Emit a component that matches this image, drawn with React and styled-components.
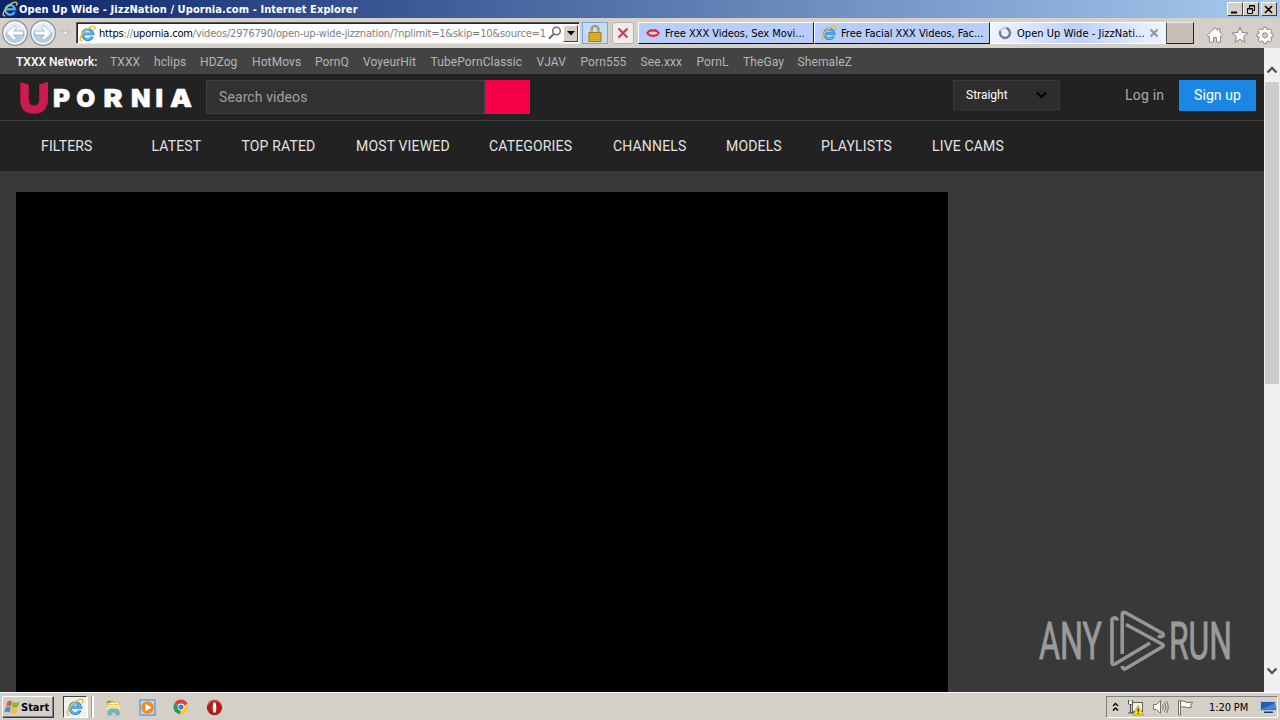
import React from 'react';
import styled, { createGlobalStyle } from 'styled-components';

const networkLinks = [
    { title: 'TXXX', width: 44 },
    { title: 'hclips', width: 46 },
    { title: 'HDZog', width: 52 },
    { title: 'HotMovs', width: 63 },
    { title: 'PornQ', width: 48 },
    { title: 'VoyeurHit', width: 67.5 },
    { title: 'TubePornClassic', width: 106 },
    { title: 'VJAV', width: 44 },
    { title: 'Porn555', width: 60 },
    { title: 'See.xxx', width: 56 },
    { title: 'PornL', width: 46.5 },
    { title: 'TheGay', width: 54.5 },
    { title: 'ShemaleZ', width: 60 },
];

const menuItems = [
    { title: 'FILTERS', width: 110.5 },
    { title: 'LATEST', width: 90 },
    { title: 'TOP RATED', width: 114.5 },
    { title: 'MOST VIEWED', width: 133 },
    { title: 'CATEGORIES', width: 124 },
    { title: 'CHANNELS', width: 113 },
    { title: 'MODELS', width: 95 },
    { title: 'PLAYLISTS', width: 111 },
    { title: 'LIVE CAMS', width: 80 },
];

/* Icons */

const IeIcon = ({ size = 16 }) => (
    <svg width={size} height={size} viewBox="0 0 16 16" fill="none">
        <path d="M12.6 11a4.800 4.800 0 1 1 .4-2.700H4.5" stroke="#2480cc" strokeWidth="2.700" />
        <path d="M12.4 10.900a4.700 4.700 0 1 1 .4-2.700H4.600" stroke="#62bdf2" strokeWidth="1.300" />
        <path d="M3.2 14.6C.2 15.7.3 11.8 4 7.400 7.800 2.800 13 .2 14.500 1.500c.8.7.5 2-.2 3.200" stroke="#edc03c" strokeWidth="1.400" />
    </svg>
);

const ArrowIcon = ({ flip }) => (
    <svg width="28" height="28" viewBox="0 0 28 28">
        <circle cx="14" cy="14" r="12.300" fill="#e3edf5" stroke="#8a939d" strokeWidth="1.300" />
        <path d="M3 14a11 11 0 0 0 22 0z" fill="#b7cddd" />
        <circle cx="14" cy="14" r="10.700" fill="none" stroke="#f8fbfd" strokeWidth="1.200" />
        <path
            transform={flip ? 'translate(28 0) scale(-1 1)' : undefined}
            d="M5.500 14l7.500-7.500 2.500 2.500-3 3H22.500v4H12.500l3 3-2.500 2.500z"
            fill="#fff"
            stroke="#8fa9bd"
            strokeWidth=".8"
        />
    </svg>
);

const SearchIcon = () => (
    <svg width="14" height="14" viewBox="0 0 14 14" fill="none" stroke="#707070">
        <circle cx="8.500" cy="5" r="3.800" strokeWidth="1.500" />
        <path d="M5.700 8L1 12.700" strokeWidth="2" />
    </svg>
);

const LockIcon = () => (
    <svg width="14" height="17" viewBox="0 0 14 17">
        <path d="M3.500 8V4.500a3.500 3.500 0 0 1 7 0V8" fill="none" stroke="#7d7448" strokeWidth="2" />
        <path d="M3.500 8V4.500a3.500 3.500 0 0 1 7 0V8" fill="none" stroke="#d2c684" strokeWidth=".8" />
        <rect x="1" y="7.500" width="12" height="9" fill="#e5b42d" stroke="#a27813" />
        <path d="M2 9.500h10M2 12h10M2 14.500h10" stroke="#cf9f20" />
    </svg>
);

const LipsIcon = () => (
    <svg width="16" height="16" viewBox="0 0 16 16">
        <path d="M1 8c2-2.500 4-4 5.500-4L8 4.700 9.500 4C11 4 13 5.500 15 8c-2 3-4.500 4-7 4S3 11 1 8z" fill="#d62c46" />
        <path d="M3.500 8c1.500-1.800 7.500-1.800 9 0-1.500 2-7.500 2-9 0z" fill="#fff" />
        <path d="M6 6.500v3M8 6.500v3M10 6.500v3" stroke="#d8808e" strokeWidth=".7" />
    </svg>
);

const SpinnerIcon = () => (
    <svg width="14" height="14" viewBox="0 0 14 14" fill="none">
        <circle cx="7" cy="7" r="5" stroke="#c1cce0" strokeWidth="2.300" />
        <path d="M8.500 2.200A5 5 0 1 1 2.400 5" stroke="#707b93" strokeWidth="2.300" />
    </svg>
);

const HomeIcon = () => (
    <svg width="18" height="18" viewBox="0 0 18 18">
        <path
            d="M9 1.800l2.700 2.600V2.700h2.200v3.700l3 3-1.300 1.300-1-.9v6.400h-4.100v-4.700h-3v4.700H3.400V9.800l-1 .9-1.300-1.300z"
            fill="#fff"
            stroke="#8b8b8b"
        />
    </svg>
);

const StarIcon = () => (
    <svg width="18" height="18" viewBox="0 0 18 18">
        <path d="M9 1.300l2.200 5.300 5.700.4-4.400 3.700 1.400 5.600L9 13.300l-4.900 3 1.400-5.600L1.100 7l5.700-.4z" fill="#fff" stroke="#858585" />
    </svg>
);

const GearIcon = () => (
    <svg width="18" height="18" viewBox="0 0 18 18">
        <path
            d="M7.600 1.300h2.800l.5 2 1.100.5 1.900-1.100 1.900 2-1.100 1.800.5 1.100 1.900.5v2.400l-1.900.6-.5 1.100 1.100 1.800-1.900 2-1.900-1.100-1.100.5-.5 2H7.600l-.5-2-1.100-.5L4.100 16l-1.900-2 1.100-1.800-.5-1.100-1.900-.6V8.100l1.900-.5.5-1.100-1.100-1.800 1.900-2L6 3.800l1.100-.5z"
            fill="#fff"
            stroke="#858585"
        />
        <circle cx="9" cy="9.300" r="2.500" fill="#d4d0c8" stroke="#858585" />
    </svg>
);

const WindowsIcon = () => (
    <svg width="17" height="17" viewBox="0 0 17 17">
        <path d="M3.500 2.600C5 1.600 6.500 1.500 8.200 2.500L7 7.500C5.300 6.600 3.800 6.700 2 7.600z" fill="#ea5b2a" />
        <path d="M9 3c2 1 4 1 6.500-.4L14 7.700c-2 1.200-4 1.200-6.200.2z" fill="#82b941" />
        <path d="M1.700 8.500c1.800-.9 3.400-.9 5.100 0l-1.300 5c-1.600-1-3.300-.9-5.200 0z" fill="#3d8bd4" />
        <path d="M7.600 9c2 1 4 1 6.200-.2l-1.400 5.100c-2 1.200-4 1.100-6.100 0z" fill="#f6bd29" />
    </svg>
);

const FolderIcon = () => (
    <svg width="17" height="17" viewBox="0 0 17 17">
        <path d="M2 2h6l1 2h6v9H2z" fill="#e9cb65" stroke="#c9aa48" strokeWidth=".7" />
        <path d="M4 4.500h10M3 6.500h12" stroke="#fff8ca" />
        <path d="M1.500 7.500h14v5h-14z" fill="#f8e69b" />
        <path d="M3 16v-3.500C3 10.800 4 10 5.500 10h6c1.700 0 2.500.8 2.500 2.500V16h-3v-3H6v3z" fill="#72b8df" stroke="#438fbd" strokeWidth=".5" />
        <path d="M3 2v2M5 2v2" stroke="#48a868" strokeWidth="1.500" />
    </svg>
);

const PlayerIcon = () => (
    <svg width="17" height="17" viewBox="0 0 17 17">
        <rect x="1" y="1" width="15" height="15" fill="#b7dcf6" stroke="#4386bd" />
        <circle cx="8.500" cy="8.500" r="6.300" fill="#f28a1c" />
        <path d="M6.500 4.800l6 3.700-6 3.700z" fill="#fff" />
    </svg>
);

const ChromeIcon = () => (
    <svg width="16" height="16" viewBox="0 0 16 16">
        <path d="M8 8L1.500 4.300A7.200 7.200 0 0 1 14.500 5z" fill="#dc4437" />
        <path d="M8 8L1.500 4.300A7.200 7.200 0 0 0 7.400 15.200z" fill="#2b9b52" />
        <path d="M8 8l6.500-3A7.200 7.200 0 0 1 7.400 15.200z" fill="#f9c928" />
        <circle cx="8" cy="8" r="3.400" fill="#fff" />
        <circle cx="8" cy="8" r="2.600" fill="#3b7ddd" />
    </svg>
);

const OperaIcon = () => (
    <svg width="17" height="17" viewBox="0 0 17 17">
        <circle cx="8.500" cy="8.500" r="7.700" fill="#b31a1d" />
        <path d="M2.500 5.500c2-5 10-5 12 0" stroke="#dd6a67" fill="none" />
        <ellipse cx="8.500" cy="8.500" rx="1.800" ry="5.300" fill="#fff" />
    </svg>
);

const NetworkIcon = () => (
    <svg width="17" height="17" viewBox="0 0 17 17">
        <rect x="5.500" y="3.500" width="10" height="9" fill="#f3f3ee" stroke="#63635e" />
        <path d="M1.500 1v4h4V1M3.500 5v8.500H8M1 14h5" fill="none" stroke="#4f4f4b" />
        <path d="M2 2.500h3V5H2z" fill="#fff" />
        <path d="M11 6.500L5.800 16h10.700z" fill="#f7df23" stroke="#a78c0e" strokeWidth=".7" />
        <path d="M11.200 9.500v3.200M11.200 13.700v1.300" stroke="#222" strokeWidth="1.300" />
    </svg>
);

const SpeakerIcon = () => (
    <svg width="17" height="16" viewBox="0 0 17 16" fill="none" stroke="#77736c">
        <path d="M1.500 5.500h3l4-4v13l-4-4h-3z" fill="#fff" />
        <path d="M10.500 5.500q1.800 2.500 0 5M12.500 3.500q3 4.500 0 9M14.500 2q3.500 6 0 12" />
    </svg>
);

const FlagIcon = () => (
    <svg width="17" height="17" viewBox="0 0 17 17">
        <path d="M1.500 1.500h2V16h-2z" fill="#fff" stroke="#6c6963" />
        <path d="M3.500 2.500c2-.8 4-.6 5.500.8h6.500l-2 3.500 1 1.500c-2 1-4 .5-6-.3-1.500-.5-3-.3-5 .5z" fill="#fff" stroke="#6c6963" />
    </svg>
);

const DesktopIcon = () => (
    <svg width="17" height="14" viewBox="0 0 17 14">
        <path d="M.5 1.500h15l1 9h-16z" fill="#245fae" stroke="#b5c8db" />
        <path d="M2 8C5 8 10 6 15 2.500v7H2z" fill="#4489d0" />
        <path d="M4 11.500h9v1.500H4z" fill="#1e3e6e" />
    </svg>
);

const Chevron = ({ up, color = '#555', size = 12 }) => (
    <svg width={size} height="8" viewBox="0 0 12 8" fill="none" stroke={color} strokeWidth="2.300">
        <path d={up ? 'M1.500 6.500L6 2l4.500 4.500' : 'M1.500 1.500L6 6l4.500-4.500'} />
    </svg>
);

const logoLetters = [
    { letter: 'P', x: 33, width: 17 },
    { letter: 'O', x: 56.3, width: 19 },
    { letter: 'R', x: 83.4, width: 19 },
    { letter: 'N', x: 111, width: 19.5 },
    { letter: 'I', x: 135.5, width: 7.5 },
    { letter: 'A', x: 150, width: 22 },
];

const SiteLogo = () => (
    <svg width="174" height="36" viewBox="0 0 174 36">
        <path d="M.3 2l8.500 2.500v14.500c0 4.500 1.900 6.500 5.200 6.500s5.200-2 5.200-6.500V4.500L28 2v17.500c0 9-4.800 14.300-14 14.300S.3 28.500.3 19.500z" fill="#cc1b4f" />
        <g fill="#fff" stroke="#fff" strokeWidth=".5" fontFamily="Inter" fontWeight="900" fontSize="24.500">
            {logoLetters.map((item) => (
                <text key={item.letter} x={item.x} y="27" textLength={item.width} lengthAdjust="spacingAndGlyphs">
                    {item.letter}
                </text>
            ))}
        </g>
    </svg>
);

const Watermark = () => (
    <svg width="210" height="64" viewBox="0 0 210 64" overflow="visible" fill="#9b9b9b" fontFamily="Roboto" fontSize="51">
        <g stroke="#9b9b9b" strokeWidth=".9">
            <text x="2" y="50" textLength="63" lengthAdjust="spacingAndGlyphs">ANY</text>
            <text x="132" y="50" textLength="63" lengthAdjust="spacingAndGlyphs">RUN</text>
        </g>
        <g fill="none" stroke="#969696" strokeWidth="3.600" strokeLinejoin="round">
            <path d="M80.500 11.500Q79.500 8.500 77 9t-2 3v41.500q0 3 3 1.500L113 34" />
            <path d="M85.200 45V6q0-4 3.500-2.200L125 24q2.500 2 0 3.500-1.500.8-4-.8" />
            <path d="M89 15.500L125 35q2.500 1.500 0 3L89 59.500q-3 1.500-4-2.500" />
        </g>
    </svg>
);

/* Page */

function App() {
    return (
        <Screen>
            <GlobalStyle />
            <TitleBar>
                <IeIcon />
                <WindowTitle>Open Up Wide - JizzNation / Upornia.com - Internet Explorer</WindowTitle>
                <WindowButtons>
                    <WindowButton>
                        <svg width="10" height="9"><path d="M1 7.500h6" stroke="#000" strokeWidth="2" /></svg>
                    </WindowButton>
                    <WindowButton>
                        <svg width="10" height="9" fill="none" stroke="#000">
                            <path d="M3.500 3V.5h5v5H7M3 1h6M1.500 3.500h5v5h-5zM1 4h6" />
                        </svg>
                    </WindowButton>
                    <WindowButton $gap>
                        <svg width="10" height="9"><path d="M1 1l7 7M8 1L1 8" stroke="#000" strokeWidth="1.600" /></svg>
                    </WindowButton>
                </WindowButtons>
            </TitleBar>

            <Toolbar>
                <HistoryButtons>
                    <ArrowIcon />
                    <ArrowIcon flip />
                    <svg width="11" height="7"><path d="M1 1h9L5.500 5.500z" fill="#eee" stroke="#b3adb1" /></svg>
                </HistoryButtons>
                <AddressBar>
                    <IeIcon size={17} />
                    <Url>
                        <b>https</b>://<b>upornia.com</b>/videos/2976790/open-up-wide-jizznation/?nplimit=1&amp;skip=10&amp;source=1
                    </Url>
                    <SearchIcon />
                    <DropButton>
                        <svg width="8" height="5"><path d="M0 0h8L4 4.500z" /></svg>
                    </DropButton>
                </AddressBar>
                <LockButton><LockIcon /></LockButton>
                <StopButton>
                    <svg width="14" height="14"><path d="M2.500 2.500l9 9M11.500 2.500l-9 9" stroke="#c33c3e" strokeWidth="2" /></svg>
                </StopButton>
                <Tab>
                    <LipsIcon />
                    <TabTitle>Free XXX Videos, Sex Movi...</TabTitle>
                </Tab>
                <Tab>
                    <IeIcon />
                    <TabTitle>Free Facial XXX Videos, Fac...</TabTitle>
                </Tab>
                <Tab $active>
                    <SpinnerIcon />
                    <TabTitle $active>Open Up Wide - JizzNati...</TabTitle>
                    <svg width="10" height="10"><path d="M1.500 1.500l7 7M8.500 1.500l-7 7" stroke="#8995ab" strokeWidth="2" /></svg>
                </Tab>
                <NewTab />
                <ToolIcons>
                    <HomeIcon />
                    <StarIcon />
                    <GearIcon />
                </ToolIcons>
            </Toolbar>

            <Viewport>
                <Site>
                    <NetworkBar>
                        <NetworkTitle>TXXX Network:</NetworkTitle>
                        {networkLinks.map((link) => (
                            <NetworkLink key={link.title} $width={link.width}>{link.title}</NetworkLink>
                        ))}
                    </NetworkBar>
                    <Header>
                        <SiteLogo />
                        <SearchBox>Search videos</SearchBox>
                        <SearchButton />
                        <Orientation>
                            Straight
                            <Chevron color="#000" size={13} />
                        </Orientation>
                        <LoginLink>Log in</LoginLink>
                        <SignupButton>Sign up</SignupButton>
                    </Header>
                    <Menu>
                        {menuItems.map((item) => (
                            <MenuItem key={item.title} $width={item.width}>{item.title}</MenuItem>
                        ))}
                    </Menu>
                    <Content>
                        <Player />
                        <WatermarkBox><Watermark /></WatermarkBox>
                    </Content>
                </Site>
                <Scrollbar>
                    <ScrollCap $top><Chevron up /></ScrollCap>
                    <ScrollThumb />
                    <ScrollCap><Chevron /></ScrollCap>
                </Scrollbar>
            </Viewport>

            <Taskbar>
                <StartButton><WindowsIcon />Start</StartButton>
                <ActiveTask><IeIcon size={18} /></ActiveTask>
                <TaskEdge />
                <QuickLaunch>
                    <FolderIcon />
                    <PlayerIcon />
                    <ChromeIcon />
                    <OperaIcon />
                </QuickLaunch>
                <Tray>
                    <svg width="7" height="10" fill="none" stroke="#000" strokeWidth="1.400">
                        <path d="M1 4l2.500-2.500L6 4M1 8.500L3.500 6 6 8.500" />
                    </svg>
                    <NetworkIcon />
                    <SpeakerIcon />
                    <FlagIcon />
                    <Clock>1:20 PM</Clock>
                    <DesktopIcon />
                </Tray>
            </Taskbar>
        </Screen>
    );
}

const GlobalStyle = createGlobalStyle`
    * {
        box-sizing: border-box;
    }

    body {
        margin: 0;
        overflow: hidden;
    }

    svg {
        display: block;
        flex-shrink: 0;
    }
`;

const Screen = styled.div`
    width: 1280px;
    height: 720px;
    display: flex;
    flex-direction: column;
    overflow: hidden;
    background: #d4d0c8;
    font-family: "DejaVu Sans Condensed", "DejaVu Sans", sans-serif;
    font-stretch: condensed;
    white-space: nowrap;
`;

const TitleBar = styled.div`
    height: 18px;
    display: flex;
    align-items: center;
    padding: 0 3px 0 2px;
    background: linear-gradient(90deg, #0a246a, #a6caf0);
`;

const WindowTitle = styled.span`
    margin-left: 1px;
    color: #fff;
    font-size: 11px;
    font-weight: 700;
    letter-spacing: 0.08px;
`;

const WindowButtons = styled.div`
    display: flex;
    margin-left: auto;
`;

const WindowButton = styled.div`
    width: 16px;
    height: 14px;
    display: flex;
    align-items: center;
    justify-content: center;
    margin-left: ${({ $gap }) => ($gap ? '2px' : '0')};
    background: #d4d0c8;
    border: 1px solid;
    border-color: #fff #404040 #404040 #fff;
`;

const Toolbar = styled.div`
    height: 30px;
    display: flex;
    align-items: flex-start;
    padding-top: 4px;
`;

const HistoryButtons = styled.div`
    width: 76px;
    height: 26px;
    display: flex;
    align-items: center;
    padding: 0 0 4px 1px;

    svg:last-child {
        margin-left: 3px;
    }
`;

const AddressBar = styled.div`
    width: 504px;
    height: 22px;
    display: flex;
    align-items: center;
    padding: 0 1px 0 2px;
    background: #fff;
    border: 1px solid;
    border-color: #55505a #eeeae2 #eeeae2 #55505a;
    box-shadow: inset 1px 1px 0 #2c2530;
`;

const Url = styled.span`
    width: 449px;
    margin-left: 3px;
    color: #808080;
    font-size: 11px;
    letter-spacing: -0.19px;

    b {
        color: #000;
        font-weight: 400;
    }
`;

const DropButton = styled.div`
    width: 15px;
    height: 17px;
    display: flex;
    align-items: center;
    justify-content: center;
    margin-left: auto;
    background: #d4d0c8;
    border: 1px solid;
    border-color: #fff #404040 #404040 #fff;
`;

const LockButton = styled.div`
    width: 26px;
    height: 22px;
    display: flex;
    align-items: center;
    justify-content: center;
    margin-left: 2px;
    background: #c5dcf7;
    border: 1px solid #77a6df;
`;

const StopButton = styled.div`
    width: 22px;
    height: 22px;
    display: flex;
    align-items: center;
    justify-content: center;
    margin: 0 4px;
    background: #eeecee;
    border: 1px solid #b7b1b6;
    border-radius: 3px;
`;

const Tab = styled.div`
    width: 176px;
    height: 22px;
    display: flex;
    align-items: center;
    padding: ${({ $active }) => ($active ? '0 6px 0 7px' : '0 6px')};
    background: ${({ $active }) => ($active ? 'linear-gradient(90deg, #f0f4ff, #bdd0fb 50%, #f0f4ff)' : '#b9cdfa')};
    border: 1px solid;
    border-color: #fff ${({ $active }) => ($active ? '#eee' : '#202020')} ${({ $active }) => ($active ? '#fff' : '#101010')} #fff;
`;

const TabTitle = styled.span`
    flex: 1;
    margin-left: ${({ $active }) => ($active ? '5px' : '4px')};
    color: #000;
    font-size: 11px;
    letter-spacing: ${({ $active }) => ($active ? '0.05px' : '-0.03px')};
`;

const NewTab = styled.div`
    width: 28px;
    height: 22px;
    background: #c8beb7;
    border: 1px solid;
    border-color: #eee #222 #222 #555;
`;

const ToolIcons = styled.div`
    display: flex;
    gap: 7px;
    margin: 4px 0 0 12px;
`;

const Viewport = styled.div`
    height: 644px;
    display: flex;
`;

const Site = styled.div`
    width: 1264px;
    display: flex;
    flex-direction: column;
    font-family: Roboto, sans-serif;
    font-stretch: normal;
`;

const NetworkBar = styled.div`
    height: 26px;
    display: flex;
    align-items: center;
    padding: 1px 0 0 16px;
    background: #434343;
    font-size: 12px;
    letter-spacing: 0.1px;
`;

const NetworkTitle = styled.span`
    width: 94px;
    color: #fff;
    font-weight: 500;
    letter-spacing: 0;
`;

const NetworkLink = styled.span`
    width: ${({ $width }) => $width}px;
    color: #b5b5b5;
`;

const Header = styled.header`
    height: 47px;
    display: flex;
    align-items: flex-start;
    padding: 6px 8px 0 20px;
    background: #222;
    border-bottom: 1px solid #3b3b3b;
`;

const SearchBox = styled.div`
    width: 279px;
    height: 34px;
    margin-left: 12px;
    padding-left: 12px;
    background: #313131;
    border: 1px solid #414141;
    color: #a0a0a0;
    font-size: 14px;
    line-height: 32px;
    letter-spacing: 0.1px;
`;

const SearchButton = styled.div`
    width: 45px;
    height: 34px;
    background: #f50046;
`;

const Orientation = styled.div`
    width: 107px;
    height: 30px;
    display: flex;
    align-items: center;
    justify-content: space-between;
    margin-left: 423px;
    padding: 0 11px 0 12px;
    background: #2d2d2d;
    border: 1px solid #393939;
    color: #fff;
    font-size: 12px;
`;

const LoginLink = styled.span`
    width: 54px;
    margin-left: 65px;
    color: #aaa;
    font-size: 14px;
    line-height: 31px;
    letter-spacing: 0.2px;
`;

const SignupButton = styled.div`
    width: 77px;
    height: 31px;
    background: #1b87e5;
    color: #fff;
    font-size: 14px;
    line-height: 31px;
    text-align: center;
    letter-spacing: 0.1px;
`;

const Menu = styled.nav`
    height: 50px;
    display: flex;
    align-items: center;
    padding-left: 41px;
    background: #222;
    color: #e3e3e3;
    font-size: 14px;
    letter-spacing: 0.16px;
`;

const MenuItem = styled.span`
    width: ${({ $width }) => $width}px;
`;

const Content = styled.main`
    height: 521px;
    display: flex;
    align-items: flex-end;
    background: #393939;
`;

const Player = styled.div`
    width: 932px;
    height: 500px;
    margin-left: 16px;
    background: #000;
`;

const WatermarkBox = styled.div`
    margin: 0 0 19px 89px;
`;

const Scrollbar = styled.div`
    width: 16px;
    display: flex;
    flex-direction: column;
    background: #f0f0f0;
`;

const ScrollCap = styled.div`
    height: 34px;
    display: flex;
    align-items: center;
    justify-content: center;
    margin-top: ${({ $top }) => ($top ? '0' : 'auto')};
    padding-top: ${({ $top }) => ($top ? '10px' : '0')};
    padding-bottom: ${({ $top }) => ($top ? '0' : '8px')};
`;

const ScrollThumb = styled.div`
    height: 302px;
    margin: 0 1px;
    background: #cdcdcd;
`;

const Taskbar = styled.div`
    height: 28px;
    display: flex;
    align-items: center;
    padding: 1px 2px 0;
    background: #d4d0c8;
    border-top: 1px solid #fff;
`;

const StartButton = styled.div`
    width: 52px;
    height: 22px;
    display: flex;
    align-items: center;
    padding-left: 1px;
    border: 1px solid;
    border-color: #fff #404040 #404040 #fff;
    box-shadow: inset -1px -1px 0 #808080;
    font-size: 11px;
    font-weight: 700;
`;

const ActiveTask = styled.div`
    width: 24px;
    height: 22px;
    display: flex;
    align-items: center;
    justify-content: center;
    margin-left: 9px;
    background: #f2f0ec;
    border: 1px solid;
    border-color: #404040 #fff #fff #404040;
`;

const TaskEdge = styled.div`
    width: 7px;
    height: 22px;
    border: solid #fff;
    border-width: 0 2px 0 1px;
    box-shadow: inset -1px 0 0 #a09c95;
`;

const QuickLaunch = styled.div`
    display: flex;
    align-items: center;
    gap: 17px;
    margin-left: 11px;
`;

const Tray = styled.div`
    width: 172px;
    height: 22px;
    display: flex;
    align-items: center;
    gap: 8px;
    margin-left: auto;
    padding-left: 5px;
    border: 1px solid;
    border-color: #808080 #fff #fff #808080;
`;

const Clock = styled.span`
    width: 43px;
    margin-left: 7px;
    font-size: 11px;
    letter-spacing: -0.1px;
`;

export default App;
